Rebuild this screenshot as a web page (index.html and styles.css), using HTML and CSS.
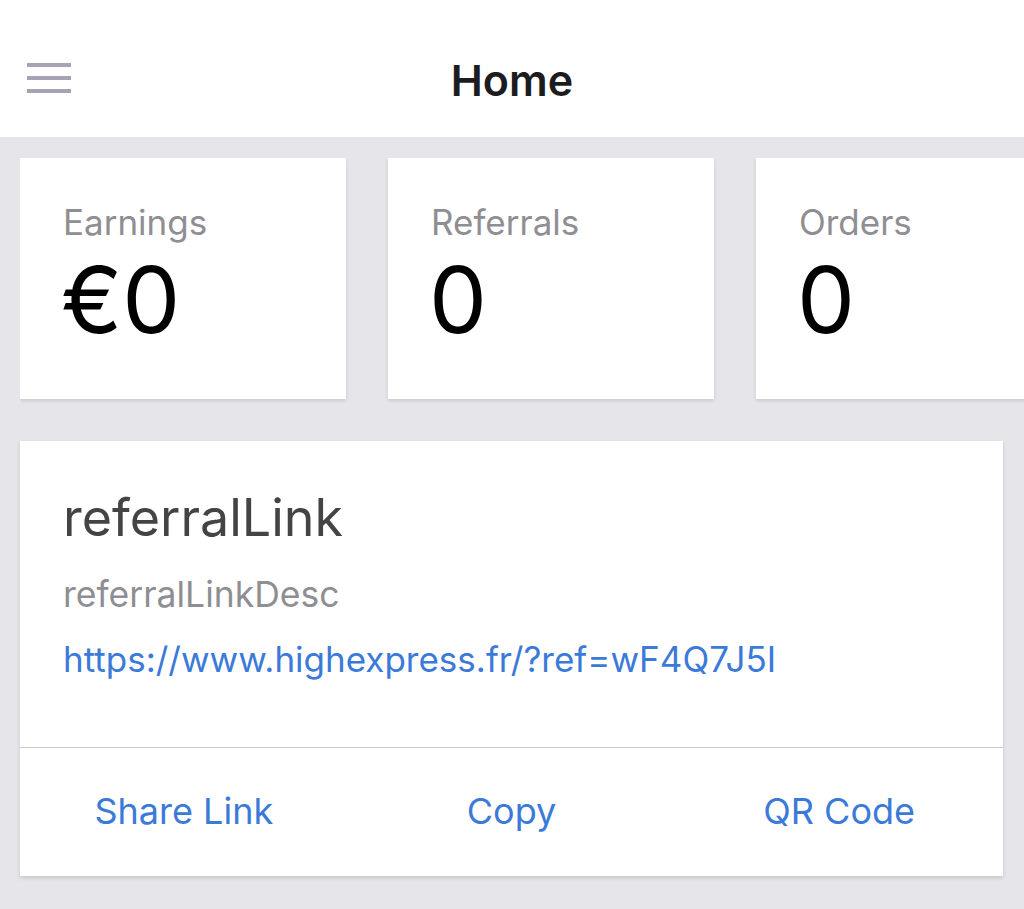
FILE: index.html
```html
<!DOCTYPE html>
<html lang="en">
<head>
    <meta charset="UTF-8">
    <meta name="viewport" content="width=device-width, initial-scale=1.0">
    <title>Home</title>
    <link rel="stylesheet" href="styles.css">
</head>
<body>
    <header class="topbar">
        <button class="menu-btn" aria-label="Menu">
            <span></span><span></span><span></span>
        </button>
        <h1>Home</h1>
    </header>

    <main class="content">
        <div class="stats">
            <div class="stat-card">
                <p class="stat-label">Earnings</p>
                <p class="stat-value">€0</p>
            </div>
            <div class="stat-card">
                <p class="stat-label">Referrals</p>
                <p class="stat-value">0</p>
            </div>
            <div class="stat-card">
                <p class="stat-label">Orders</p>
                <p class="stat-value">0</p>
            </div>
        </div>

        <div class="link-card">
            <div class="link-body">
                <h2>referralLink</h2>
                <p class="link-desc">referralLinkDesc</p>
                <a class="link-url" href="#">https://www.highexpress.fr/?ref=wF4Q7J5I</a>
            </div>
            <div class="link-actions">
                <button>Share Link</button>
                <button>Copy</button>
                <button>QR Code</button>
            </div>
        </div>
    </main>
</body>
</html>
```

FILE: styles.css
```css
body {
    margin: 0;
    font-family: Inter, "Noto Sans", sans-serif;
    background: #e5e5ea;
    color: #000;
    height: 909px;
    overflow: hidden;
}
.topbar {
    height: 137px;
    background: #fff;
    display: flex;
    align-items: center;
    justify-content: center;
    position: relative;
}
.topbar h1 {
    margin: 0;
    font-size: 43px;
    font-weight: 600;
    color: #1c1c1e;
    padding-top: 22px;
}
.menu-btn {
    position: absolute;
    left: 27px;
    top: 63px;
    width: 44px;
    padding: 0;
    border: none;
    background: none;
    display: flex;
    flex-direction: column;
    gap: 9px;
}
.menu-btn span {
    display: block;
    height: 4px;
    background: #a9a2b2;
}
.content {
    padding: 21px 20px;
}
.stats {
    display: flex;
    gap: 42px;
    overflow: hidden;
    margin-right: -20px;
    padding-bottom: 4px;
    margin-bottom: -4px;
}
.stat-card {
    flex: 0 0 326px;
    height: 241px;
    background: #fff;
    box-shadow: 0 2px 4px rgba(0, 0, 0, 0.12);
    padding: 42px 0 0 43px;
    box-sizing: border-box;
}
.stat-label {
    margin: 0;
    font-size: 35px;
    color: #8e8e93;
    line-height: 44px;
}
.stat-value {
    margin: 6px 0 0 -2px;
    font-size: 92px;
    line-height: 100px;
    font-weight: 400;
}
.link-card {
    margin-top: 42px;
    width: 983px;
    background: #fff;
    box-shadow: 0 2px 4px rgba(0, 0, 0, 0.14);
}
.link-body {
    padding: 44px 43px 0;
    height: 307px;
    box-sizing: border-box;
    border-bottom: 1px solid #c9c9ce;
    display: flex;
    flex-direction: column;
}
.link-body h2 {
    margin: 0;
    font-size: 52px;
    line-height: 66px;
    font-weight: 400;
    color: #444;
}
.link-desc {
    margin: 24px 0 0;
    font-size: 35.5px;
    line-height: 40px;
    color: #8e8e93;
}
.link-url {
    margin-top: 24px;
    font-size: 35px;
    line-height: 40px;
    color: #3b7ad9;
    text-decoration: none;
}
.link-actions {
    display: grid;
    grid-template-columns: 1fr 1fr 1fr;
    height: 128px;
    align-items: center;
}
.link-actions button {
    border: none;
    background: none;
    font-family: inherit;
    font-size: 36px;
    color: #3b7ad9;
    padding: 0;
    margin-top: -2px;
}
```
